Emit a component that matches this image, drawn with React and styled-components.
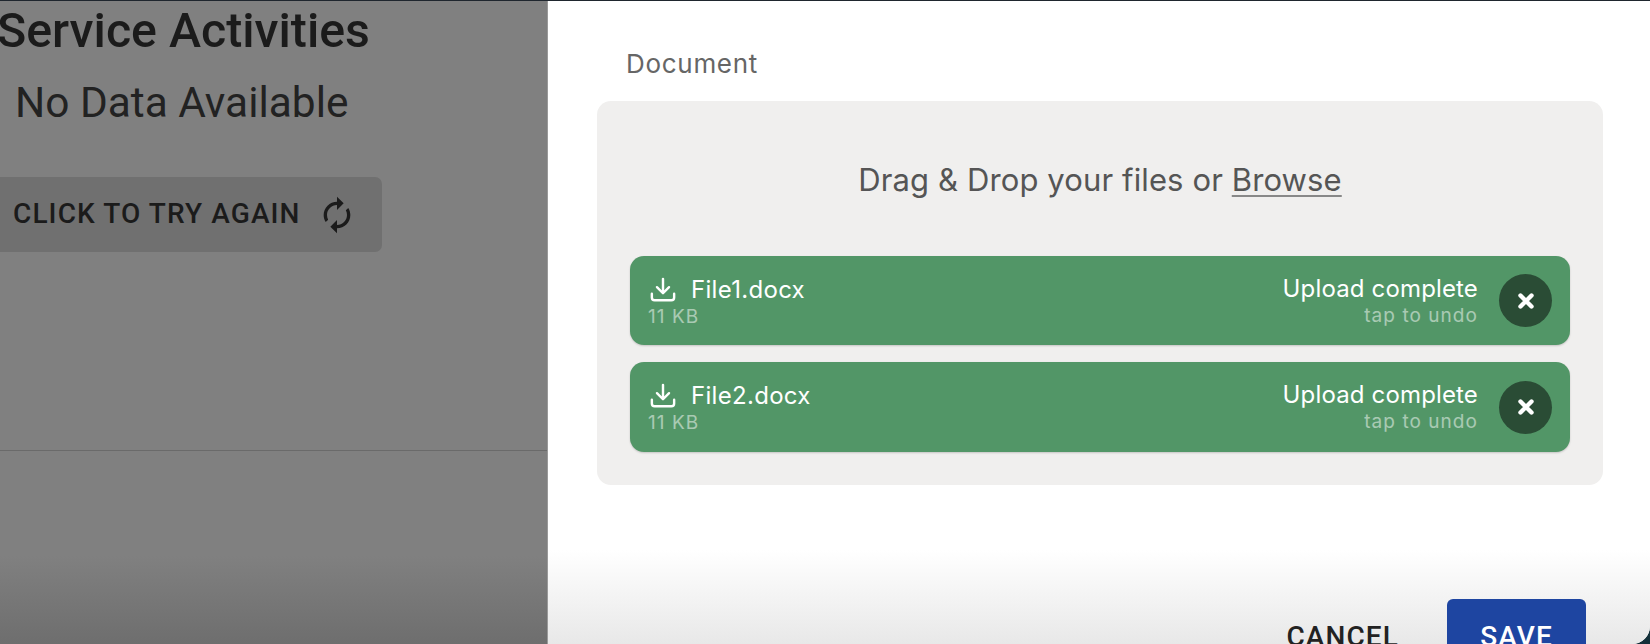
import React from "react";
import styled, { createGlobalStyle } from "styled-components";

const GlobalStyle = createGlobalStyle`
  html, body {
    margin: 0;
    padding: 0;
    background: #fff;
    overflow: hidden;
  }
`;

const Page = styled.div`
  display: flex;
  width: 1650px;
  height: 644px;
  overflow: hidden;
  border-top: 1px solid #1f262e;
  box-sizing: border-box;
  background: #14303a;
`;

const Backdrop = styled.section`
  width: 548px;
  flex: none;
  display: flex;
  flex-direction: column;
  overflow: hidden;
  background: linear-gradient(to bottom, #808080 0, #808080 555px, #6e6e6e 643px);
  font-family: Roboto, sans-serif;
  color: #1b1b1b;
  border-right: 1px solid #9a9a9a;
  box-sizing: border-box;
`;

const Heading = styled.h2`
  margin: 4px 0 0 -3px;
  font-size: 48.3px;
  line-height: 52px;
  font-weight: 500;
  white-space: nowrap;
`;

const NoData = styled.p`
  margin: 22px 0 0 15px;
  font-size: 42.4px;
  line-height: 48px;
  font-weight: 400;
  color: #222;
  white-space: nowrap;
`;

const RetryButton = styled.button`
  margin: 50px 0 0 -8px;
  flex: none;
  width: 390px;
  height: 75px;
  padding: 0 0 2px 21px;
  display: flex;
  align-items: center;
  gap: 16px;
  border: 0;
  border-radius: 7px;
  background: #707070;
  color: #1b1b1b;
  font-family: inherit;
  font-size: 28px;
  font-weight: 500;
  letter-spacing: 1.1px;
  white-space: nowrap;

  svg {
    margin-top: 2px;
  }
`;

const Divider = styled.hr`
  margin: 198px 0 0;
  border: 0;
  border-top: 1px solid #6a6a6a;
`;

const Panel = styled.section`
  flex: 1;
  display: flex;
  flex-direction: column;
  overflow: hidden;
  background: #fff;
  border-bottom-right-radius: 18px;
  font-family: Inter, sans-serif;
`;

const Label = styled.div`
  flex: none;
  margin: 46px 0 0 78px;
  font-size: 26px;
  line-height: 34px;
  letter-spacing: 0.7px;
  color: #666;
`;

const DropZone = styled.div`
  flex: none;
  margin: 20px 0 0 49px;
  width: 1006px;
  height: 384px;
  padding: 0 33px;
  box-sizing: border-box;
  background: #f0efee;
  border-radius: 14px;
`;

const DropText = styled.div`
  padding-top: 60px;
  height: 155px;
  box-sizing: border-box;
  text-align: center;
  font-size: 31px;
  line-height: 38px;
  letter-spacing: 0.12px;
  color: #555;
`;

const Browse = styled.span`
  text-decoration: underline;
  text-decoration-thickness: 2px;
  text-decoration-color: #888;
  text-underline-offset: 4px;
`;

const FileList = styled.div`
  display: flex;
  flex-direction: column;
  gap: 17px;
`;

const FileRow = styled.div`
  height: 89.4px;
  padding: 0 18px;
  box-sizing: border-box;
  display: flex;
  align-items: center;
  background: #529667;
  border-radius: 14px;
  box-shadow: 0 1px 2px rgba(0, 0, 0, 0.18);
  color: #fff;
`;

const FileInfo = styled.div`
  flex: 1;
  display: flex;
  flex-direction: column;
  padding-top: 2px;
`;

const FileName = styled.div`
  display: flex;
  align-items: center;
  gap: 15px;
  padding-left: 2px;
  font-size: 24px;
  line-height: 30px;
  letter-spacing: 0.3px;
`;

const Muted = styled.div`
  font-size: 19px;
  line-height: 24px;
  letter-spacing: 1.05px;
  opacity: 0.5;
`;

const FileStatus = styled.div`
  display: flex;
  flex-direction: column;
  align-items: flex-end;
  margin-right: 21px;
`;

const StatusText = styled.div`
  font-size: 24px;
  line-height: 30px;
  letter-spacing: 0.15px;
`;

const RemoveButton = styled.button`
  width: 53px;
  height: 53px;
  padding: 0;
  display: flex;
  align-items: center;
  justify-content: center;
  border: 0;
  border-radius: 50%;
  background: #2a4c35;
  color: #fff;
`;

const Footer = styled.div`
  flex: none;
  height: 159px;
  box-sizing: border-box;
  display: flex;
  align-items: flex-start;
  justify-content: flex-end;
  gap: 48px;
  padding: 114px 64px 0 0;
  font-family: Roboto, sans-serif;
  background: linear-gradient(to bottom, #fff 0, #fff 65px, #e8e8e8 159px);
`;

const FooterButton = styled.button`
  flex: none;
  height: 75px;
  min-width: ${p => (p.$primary ? "139px" : "auto")};
  padding: 0;
  border: 0;
  border-radius: 6px;
  background: ${p => (p.$primary ? "#1e45a1" : "transparent")};
  color: ${p => (p.$primary ? "#fff" : "#222")};
  font-family: inherit;
  font-size: 28px;
  font-weight: 500;
  letter-spacing: 1.1px;
`;

const files = ["File1.docx", "File2.docx"];

const AutorenewIcon = () => (
  <svg width="40" height="40" viewBox="0 0 24 24" fill="currentColor">
    <path d="M12 6v3l4-4-4-4v3c-4.42 0-8 3.58-8 8 0 1.57.46 3.03 1.24 4.26L6.7 14.8c-.45-.83-.7-1.79-.7-2.8 0-3.31 2.69-6 6-6zm6.76 1.74L17.3 9.2c.44.84.7 1.79.7 2.8 0 3.31-2.69 6-6 6v-3l-4 4 4 4v-3c4.42 0 8-3.58 8-8 0-1.57-.46-3.03-1.24-4.26z" />
  </svg>
);

const DownloadIcon = () => (
  <svg width="26" height="26" viewBox="0 0 28 28" fill="none" stroke="currentColor" strokeWidth="2.6" strokeLinecap="round" strokeLinejoin="round">
    <path d="M14 2v15M7.5 11l6.5 6.5 6.5-6.5" />
    <path d="M2 18v4a3 3 0 0 0 3 3h18a3 3 0 0 0 3-3v-4" />
  </svg>
);

const CloseIcon = () => (
  <svg width="20" height="20" viewBox="0 0 20 20" fill="none" stroke="currentColor" strokeWidth="4.4" strokeLinecap="round">
    <path d="M4.5 4.5l11 11M15.5 4.5l-11 11" />
  </svg>
);

export default function App() {
  return (
    <Page>
      <GlobalStyle />
      <Backdrop>
        <Heading>Service Activities</Heading>
        <NoData>No Data Available</NoData>
        <RetryButton>
          CLICK TO TRY AGAIN
          <AutorenewIcon />
        </RetryButton>
        <Divider />
      </Backdrop>
      <Panel>
        <Label>Document</Label>
        <DropZone>
          <DropText>
            Drag &amp; Drop your files or <Browse>Browse</Browse>
          </DropText>
          <FileList>
            {files.map(name => (
              <FileRow key={name}>
                <FileInfo>
                  <FileName>
                    <DownloadIcon />
                    {name}
                  </FileName>
                  <Muted>11 KB</Muted>
                </FileInfo>
                <FileStatus>
                  <StatusText>Upload complete</StatusText>
                  <Muted>tap to undo</Muted>
                </FileStatus>
                <RemoveButton>
                  <CloseIcon />
                </RemoveButton>
              </FileRow>
            ))}
          </FileList>
        </DropZone>
        <Footer>
          <FooterButton>CANCEL</FooterButton>
          <FooterButton $primary>SAVE</FooterButton>
        </Footer>
      </Panel>
    </Page>
  );
}
